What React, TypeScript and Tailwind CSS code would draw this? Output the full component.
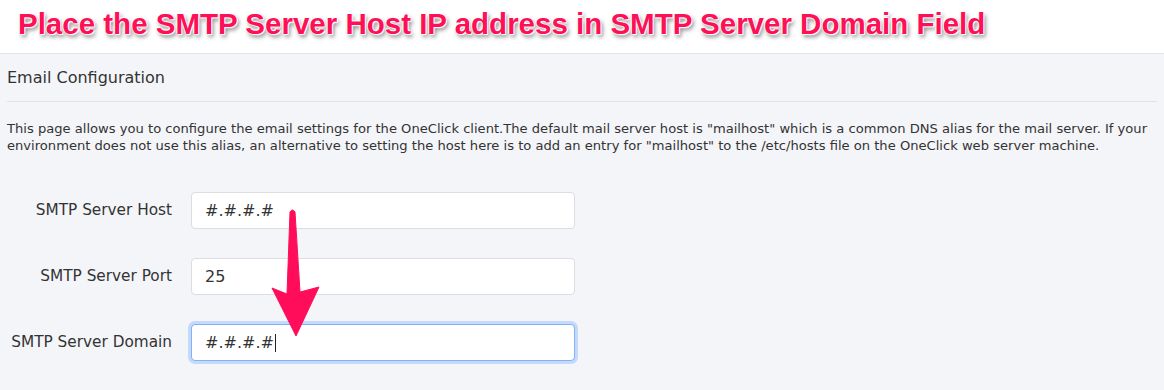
import React from "react";

const font = { fontFamily: '"DejaVu Sans", Verdana, sans-serif' };

function Field({ label, value, focused }: { label: string; value: string; focused?: boolean }) {
  return (
    <div className="flex items-center">
      <div className="w-[165px] shrink-0 text-right text-[15.3px] text-[#333]">{label}</div>
      <div
        className={
          "ml-[19px] flex h-[37px] w-[384px] items-center rounded-[4px] bg-white pl-[13px] text-[16px] text-[#333] " +
          (focused
            ? "border border-[#7fb2f6] shadow-[0_0_0_3px_rgba(140,185,250,0.45)]"
            : "border border-[#dcdde2]")
        }
      >
        <span>{value}</span>
        {focused && <span className="ml-[1px] inline-block h-[18px] w-[1px] bg-[#222]" />}
      </div>
    </div>
  );
}

export default function App() {
  return (
    <div className="relative h-[390px] w-[1164px] overflow-hidden bg-[#f4f5f9]" style={font}>
      <div className="h-[54px] border-b border-[#e3e4e8] bg-white pl-[18px] pt-[9px]">
        <div
          className="whitespace-nowrap text-[29.5px] font-bold leading-[29px] text-[#fe1057] [text-shadow:0_0_1px_#fff,0_0_2px_#fff,1px_1px_1px_#fff,-1px_-1px_1px_#fff,2px_3px_4px_rgba(0,0,0,0.5)]"
          style={{ fontFamily: '"Liberation Sans", Arial, sans-serif' }}
        >
          Place the SMTP Server Host IP address in SMTP Server Domain Field
        </div>
      </div>
      <div className="px-[7px]">
        <div className="flex h-[48px] items-center border-b border-[#e2e3e8] text-[16px] text-[#333]">
          Email Configuration
        </div>
        <p className="mt-[18px] whitespace-nowrap text-[13.1px] leading-[17px] text-[#333]">
          This page allows you to configure the email settings for the OneClick client.The default mail server host is "mailhost" which is a common DNS alias for the mail server. If your
          <br />
          environment does not use this alias, an alternative to setting the host here is to add an entry for "mailhost" to the /etc/hosts file on the OneClick web server machine.
        </p>
        <div className="mt-[38px] flex flex-col gap-[29px]">
          <Field label="SMTP Server Host" value="#.#.#.#" />
          <Field label="SMTP Server Port" value="25" />
          <Field label="SMTP Server Domain" value="#.#.#.#" focused />
        </div>
      </div>
      <svg className="pointer-events-none absolute left-0 top-0" width="1164" height="390" viewBox="0 0 1164 390">
        <path
          d="M290 212 Q292.5 208 295 212 L300 292 L319 287 L296 336 L272 288 L287 294 Z"
          fill="#ff0d5a"
          stroke="#ff0d5a"
          strokeWidth="1"
          strokeLinejoin="round"
        />
      </svg>
    </div>
  );
}
